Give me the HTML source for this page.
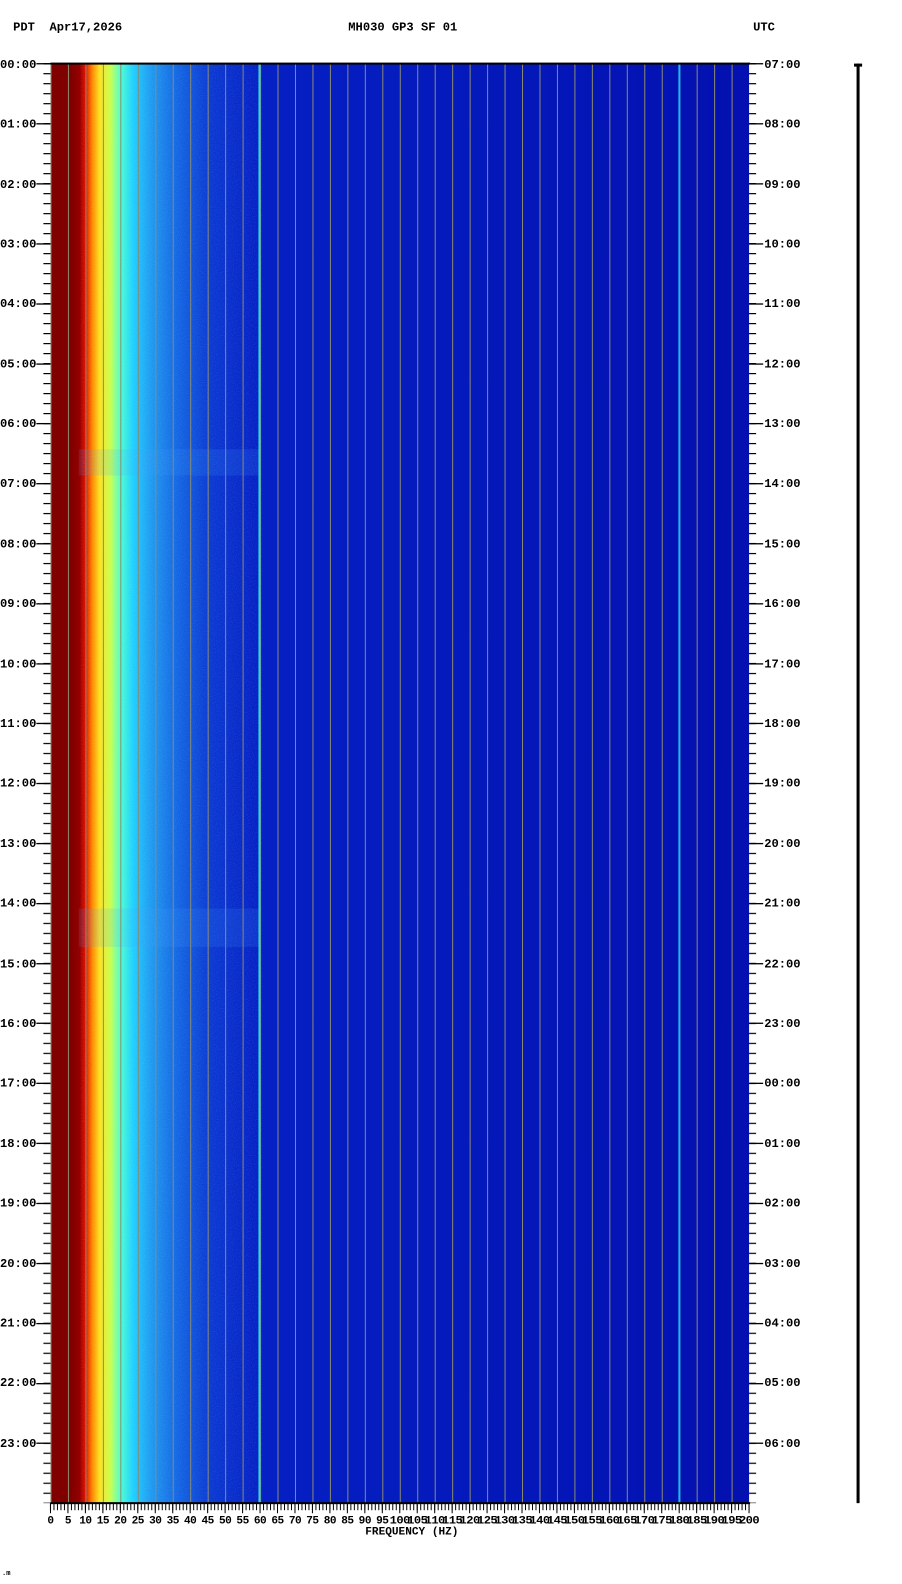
<!DOCTYPE html>
<html><head><style>
html,body{margin:0;padding:0;background:#fff;width:902px;height:1584px;overflow:hidden;}
svg{display:block;position:absolute;left:0;top:0;}
text{font-family:"Liberation Mono",monospace;font-weight:bold;fill:#000;}
</style></head><body>
<svg width="902" height="1584" viewBox="0 0 902 1584" xmlns="http://www.w3.org/2000/svg">
<defs>
<linearGradient id="sp" gradientUnits="userSpaceOnUse" x1="50" y1="0" x2="742" y2="0">
<stop offset="0" stop-color="#800000"/>
<stop offset="0.030" stop-color="#800000"/>
<stop offset="0.042" stop-color="#950000"/>
<stop offset="0.050" stop-color="#e01000"/>
<stop offset="0.060" stop-color="#ff8a00"/>
<stop offset="0.070" stop-color="#ffe020"/>
<stop offset="0.086" stop-color="#c8ff50"/>
<stop offset="0.10" stop-color="#50ffd0"/>
<stop offset="0.118" stop-color="#20d0ff"/>
<stop offset="0.145" stop-color="#2098f0"/>
<stop offset="0.18" stop-color="#1468e4"/>
<stop offset="0.23" stop-color="#0a38d2"/>
<stop offset="0.30" stop-color="#0520c4"/>
<stop offset="1" stop-color="#0410b0"/>
</linearGradient>
<pattern id="grid" patternUnits="userSpaceOnUse" x="50" y="0" width="17.3" height="10">
<rect x="0" y="0" width="1" height="10" fill="#8a8a70"/>
</pattern>
<pattern id="xt" patternUnits="userSpaceOnUse" x="49.5" y="0" width="3.46" height="20">
<rect x="0" y="0" width="1" height="20" fill="#000"/>
</pattern>
<pattern id="xt5" patternUnits="userSpaceOnUse" x="49.5" y="0" width="17.3" height="20">
<rect x="0" y="0" width="1" height="20" fill="#000"/>
</pattern>
<pattern id="yt" patternUnits="userSpaceOnUse" x="0" y="62.5" width="20" height="9.9028">
<rect x="0" y="0" width="20" height="1.2" fill="#000"/>
</pattern>
<filter id="nz" x="0" y="0" width="1" height="1">
<feTurbulence type="fractalNoise" baseFrequency="0.9" numOctaves="1" seed="3" result="t"/>
<feColorMatrix in="t" type="matrix" values="0 0 0 0 1  0 0 0 0 1  0 0 0 0 1  0 0 0 0.6 -0.25"/>
<feComposite in2="SourceGraphic" operator="in"/>
</filter>
</defs>
<g transform="scale(1.0095)">
<text x="13" y="30" font-size="12">PDT</text>
<text x="49" y="30" font-size="12">Apr17,2026</text>
<text x="399" y="30" font-size="12" text-anchor="middle">MH030 GP3 SF 01</text>
<text x="746" y="30" font-size="12">UTC</text>

<rect x="50" y="63" width="692" height="1426" fill="url(#sp)"/>
<rect x="78" y="445" width="180" height="26" fill="#40a0ff" opacity="0.15"/>
<rect x="78" y="900" width="180" height="38" fill="#40a0ff" opacity="0.15"/>
<rect x="80" y="63" width="180" height="1426" fill="#fff" filter="url(#nz)" opacity="0.35"/>
<rect x="50" y="63" width="692" height="1426" fill="url(#grid)"/>
<rect x="256" y="63" width="2" height="1426" fill="#30d0e8"/>
<rect x="672" y="63" width="2" height="1426" fill="#20b8e8"/>
<rect x="50" y="62" width="693" height="2" fill="#000"/>
<rect x="50" y="1488" width="693" height="2" fill="#000"/>

<rect x="49" y="1489" width="695" height="7" fill="url(#xt)"/>
<rect x="49" y="1489" width="695" height="10" fill="url(#xt5)"/>
<rect x="43" y="62" width="7" height="1427" fill="url(#yt)"/>
<rect x="742" y="62" width="7" height="1427" fill="url(#yt)"/>
<g fill="#000">
<rect x="36" y="62.5" width="14" height="1.3"/><rect x="742" y="62.5" width="14" height="1.3"/>
</g>

<g font-size="12" text-anchor="end" dominant-baseline="middle">
<text x="36" y="64">00:00</text><text x="36" y="123">01:00</text><text x="36" y="183">02:00</text><text x="36" y="242">03:00</text><text x="36" y="301">04:00</text><text x="36" y="361">05:00</text><text x="36" y="420">06:00</text><text x="36" y="479">07:00</text><text x="36" y="539">08:00</text><text x="36" y="598">09:00</text><text x="36" y="658">10:00</text><text x="36" y="717">11:00</text><text x="36" y="776">12:00</text><text x="36" y="836">13:00</text><text x="36" y="895">14:00</text><text x="36" y="955">15:00</text><text x="36" y="1014">16:00</text><text x="36" y="1073">17:00</text><text x="36" y="1133">18:00</text><text x="36" y="1192">19:00</text><text x="36" y="1252">20:00</text><text x="36" y="1311">21:00</text><text x="36" y="1370">22:00</text><text x="36" y="1430">23:00</text>
</g>
<g font-size="12" dominant-baseline="middle">
<text x="757" y="64">07:00</text><text x="757" y="123">08:00</text><text x="757" y="183">09:00</text><text x="757" y="242">10:00</text><text x="757" y="301">11:00</text><text x="757" y="361">12:00</text><text x="757" y="420">13:00</text><text x="757" y="479">14:00</text><text x="757" y="539">15:00</text><text x="757" y="598">16:00</text><text x="757" y="658">17:00</text><text x="757" y="717">18:00</text><text x="757" y="776">19:00</text><text x="757" y="836">20:00</text><text x="757" y="895">21:00</text><text x="757" y="955">22:00</text><text x="757" y="1014">23:00</text><text x="757" y="1073">00:00</text><text x="757" y="1133">01:00</text><text x="757" y="1192">02:00</text><text x="757" y="1252">03:00</text><text x="757" y="1311">04:00</text><text x="757" y="1370">05:00</text><text x="757" y="1430">06:00</text>
</g>
<g fill="#000">
<rect x="36" y="122" width="14" height="1.3"/><rect x="36" y="181.5" width="14" height="1.3"/><rect x="36" y="241" width="14" height="1.3"/><rect x="36" y="300.5" width="14" height="1.3"/><rect x="36" y="360" width="14" height="1.3"/><rect x="36" y="419" width="14" height="1.3"/><rect x="36" y="478.5" width="14" height="1.3"/><rect x="36" y="538" width="14" height="1.3"/><rect x="36" y="597.5" width="14" height="1.3"/><rect x="36" y="657" width="14" height="1.3"/><rect x="36" y="716" width="14" height="1.3"/><rect x="36" y="775.5" width="14" height="1.3"/><rect x="36" y="835" width="14" height="1.3"/><rect x="36" y="894.5" width="14" height="1.3"/><rect x="36" y="954" width="14" height="1.3"/><rect x="36" y="1013" width="14" height="1.3"/><rect x="36" y="1072.5" width="14" height="1.3"/><rect x="36" y="1132" width="14" height="1.3"/><rect x="36" y="1191.5" width="14" height="1.3"/><rect x="36" y="1251" width="14" height="1.3"/><rect x="36" y="1310.5" width="14" height="1.3"/><rect x="36" y="1370" width="14" height="1.3"/><rect x="36" y="1429" width="14" height="1.3"/>
<rect x="742" y="122" width="14" height="1.3"/><rect x="742" y="181.5" width="14" height="1.3"/><rect x="742" y="241" width="14" height="1.3"/><rect x="742" y="300.5" width="14" height="1.3"/><rect x="742" y="360" width="14" height="1.3"/><rect x="742" y="419" width="14" height="1.3"/><rect x="742" y="478.5" width="14" height="1.3"/><rect x="742" y="538" width="14" height="1.3"/><rect x="742" y="597.5" width="14" height="1.3"/><rect x="742" y="657" width="14" height="1.3"/><rect x="742" y="716" width="14" height="1.3"/><rect x="742" y="775.5" width="14" height="1.3"/><rect x="742" y="835" width="14" height="1.3"/><rect x="742" y="894.5" width="14" height="1.3"/><rect x="742" y="954" width="14" height="1.3"/><rect x="742" y="1013" width="14" height="1.3"/><rect x="742" y="1072.5" width="14" height="1.3"/><rect x="742" y="1132" width="14" height="1.3"/><rect x="742" y="1191.5" width="14" height="1.3"/><rect x="742" y="1251" width="14" height="1.3"/><rect x="742" y="1310.5" width="14" height="1.3"/><rect x="742" y="1370" width="14" height="1.3"/><rect x="742" y="1429" width="14" height="1.3"/>
</g>

<g font-size="11" text-anchor="middle" letter-spacing="-0.5">
<text x="50" y="1509">0</text><text x="67.3" y="1509">5</text><text x="84.6" y="1509">10</text><text x="101.9" y="1509">15</text><text x="119.2" y="1509">20</text><text x="136.5" y="1509">25</text><text x="153.8" y="1509">30</text><text x="171.1" y="1509">35</text><text x="188.4" y="1509">40</text><text x="205.7" y="1509">45</text><text x="223" y="1509">50</text><text x="240.3" y="1509">55</text><text x="257.6" y="1509">60</text><text x="274.9" y="1509">65</text><text x="292.2" y="1509">70</text><text x="309.5" y="1509">75</text><text x="326.8" y="1509">80</text><text x="344.1" y="1509">85</text><text x="361.4" y="1509">90</text><text x="378.7" y="1509">95</text>
<text x="396" y="1509" textLength="20" lengthAdjust="spacingAndGlyphs">100</text><text x="413.3" y="1509" textLength="20" lengthAdjust="spacingAndGlyphs">105</text><text x="430.6" y="1509" textLength="20" lengthAdjust="spacingAndGlyphs">110</text><text x="447.9" y="1509" textLength="20" lengthAdjust="spacingAndGlyphs">115</text><text x="465.2" y="1509" textLength="20" lengthAdjust="spacingAndGlyphs">120</text><text x="482.5" y="1509" textLength="20" lengthAdjust="spacingAndGlyphs">125</text><text x="499.8" y="1509" textLength="20" lengthAdjust="spacingAndGlyphs">130</text><text x="517.1" y="1509" textLength="20" lengthAdjust="spacingAndGlyphs">135</text><text x="534.4" y="1509" textLength="20" lengthAdjust="spacingAndGlyphs">140</text><text x="551.7" y="1509" textLength="20" lengthAdjust="spacingAndGlyphs">145</text><text x="569" y="1509" textLength="20" lengthAdjust="spacingAndGlyphs">150</text><text x="586.3" y="1509" textLength="20" lengthAdjust="spacingAndGlyphs">155</text><text x="603.6" y="1509" textLength="20" lengthAdjust="spacingAndGlyphs">160</text><text x="620.9" y="1509" textLength="20" lengthAdjust="spacingAndGlyphs">165</text><text x="638.2" y="1509" textLength="20" lengthAdjust="spacingAndGlyphs">170</text><text x="655.5" y="1509" textLength="20" lengthAdjust="spacingAndGlyphs">175</text><text x="672.8" y="1509" textLength="20" lengthAdjust="spacingAndGlyphs">180</text><text x="690.1" y="1509" textLength="20" lengthAdjust="spacingAndGlyphs">185</text><text x="707.4" y="1509" textLength="20" lengthAdjust="spacingAndGlyphs">190</text><text x="724.7" y="1509" textLength="20" lengthAdjust="spacingAndGlyphs">195</text><text x="742" y="1509" textLength="20" lengthAdjust="spacingAndGlyphs">200</text>
</g>
<text x="408" y="1520" font-size="11" text-anchor="middle">FREQUENCY (HZ)</text>
<text x="2" y="1560" font-size="7">.m</text>

<rect x="848.5" y="63" width="3" height="1426" fill="#000"/>
<rect x="846" y="63" width="8" height="3" fill="#000"/>
</g>
</svg>
</body></html>
